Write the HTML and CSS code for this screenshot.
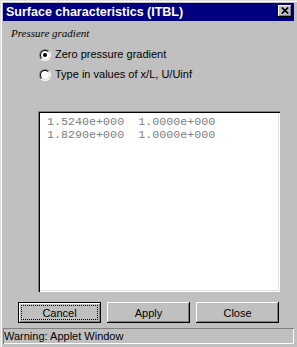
FILE: index.html
```html
<!DOCTYPE html>
<html>
<head>
<meta charset="utf-8">
<link rel="stylesheet" href="styles.css">
</head>
<body>
<div class="window">
  <div class="titlebar">
    <span class="title">Surface characteristics (ITBL)</span>
    <span class="close"><svg width="8" height="7" viewBox="0 0 8 7"><path d="M0.8 0.5 L7.2 6.5 M7.2 0.5 L0.8 6.5" stroke="#000" stroke-width="1.7" fill="none"/></svg></span>
  </div>
  <div class="legend">Pressure gradient</div>
  <div class="radios">
    <div class="radio-row"><span class="radio"><span class="radio-in"><span class="dot"></span></span></span><span class="label">Zero pressure gradient</span></div>
    <div class="radio-row"><span class="radio"><span class="radio-in"></span></span><span class="label">Type in values of x/L, U/Uinf</span></div>
  </div>
  <div class="textarea"><div class="line">1.5240e+000  1.0000e+000</div><div class="line">1.8290e+000  1.0000e+000</div></div>
  <div class="buttons">
    <div class="btn default"><span class="focus">Cancel</span></div>
    <div class="btn"><span class="plain">Apply</span></div>
    <div class="btn"><span class="plain">Close</span></div>
  </div>
  <div class="status">Warning: Applet Window</div>
</div>
</body>
</html>
```
FILE: styles.css
```css
html, body {
  margin: 0;
  padding: 0;
  background: #c0c0c0;
}
.window {
  width: 297px;
  height: 347px;
  box-sizing: border-box;
  padding: 3px;
  background: #c0c0c0;
  box-shadow: inset 1px 1px #dfdfdf, inset 2px 2px #ffffff;
  display: flex;
  flex-direction: column;
  font-family: "Liberation Sans", Arial, sans-serif;
  font-size: 11px;
  color: #000;
}
.titlebar {
  height: 18px;
  flex: none;
  background: #000080;
  display: flex;
  justify-content: space-between;
  align-items: flex-start;
}
.title {
  color: #fff;
  font-weight: bold;
  font-size: 12.5px;
  line-height: 18px;
  padding-left: 3px;
  white-space: nowrap;
}
.close {
  width: 14px;
  height: 12px;
  margin-top: 2px;
  margin-right: 2px;
  background: #c0c0c0;
  box-shadow: inset -1px -1px #000, inset 1px 1px #fff, inset -2px -2px #808080;
  display: flex;
  align-items: center;
  justify-content: center;
}
.close svg { display: block; margin-top: -1px; }
.legend {
  margin: 6px 0 0 8px;
  font-family: "Liberation Serif", "Times New Roman", serif;
  font-style: italic;
  font-size: 11px;
  line-height: 13px;
}
.radios {
  margin: 4px 0 0 36px;
  display: flex;
  flex-direction: column;
}
.radio-row {
  height: 20px;
  display: flex;
  align-items: flex-start;
}
.radio {
  margin-top: 5px;
  width: 12px;
  height: 12px;
  box-sizing: border-box;
  border-radius: 50%;
  border: 1px solid;
  border-color: #808080 #ffffff #ffffff #808080;
  display: flex;
}
.radio-in {
  flex: 1;
  border-radius: 50%;
  border: 1px solid;
  border-color: #000 #dfdfdf #dfdfdf #000;
  background: #fff;
  display: flex;
  align-items: center;
  justify-content: center;
}
.dot {
  width: 4px;
  height: 4px;
  border-radius: 50%;
  background: #000;
}
.label {
  margin-left: 4px;
  line-height: 20px;
  white-space: nowrap;
}
.textarea {
  margin: 27px 0 0 35px;
  width: 242px;
  height: 181px;
  flex: none;
  box-sizing: border-box;
  background: #fff;
  box-shadow: inset 1px 1px #808080, inset 2px 2px #000, inset -1px -1px #fff, inset -2px -2px #dfdfdf;
  padding: 5px 0 0 9px;
  font-family: "Liberation Mono", "Courier New", monospace;
  font-size: 11.7px;
  line-height: 13px;
  color: #808080;
  white-space: pre;
}
.buttons {
  margin: 10px 0 0 15px;
  display: flex;
  gap: 6px;
}
.btn {
  width: 83px;
  height: 21px;
  box-sizing: border-box;
  display: flex;
  background: #c0c0c0;
  box-shadow: inset -1px -1px #000, inset 1px 1px #fff, inset -2px -2px #808080;
}
.btn.default {
  border: 1px solid #000;
  padding: 2px;
  box-shadow: inset 1px 1px #fff, inset -1px -1px #808080;
}
.focus, .plain {
  flex: 1;
  display: flex;
  align-items: center;
  justify-content: center;
}
.focus {
  border: 1px dotted #000;
}
.status {
  margin-top: 5px;
  height: 16px;
  flex: none;
  box-shadow: inset 1px 1px #808080, inset -1px -1px #fff;
  padding-left: 1px;
  line-height: 16px;
  white-space: nowrap;
}
```
